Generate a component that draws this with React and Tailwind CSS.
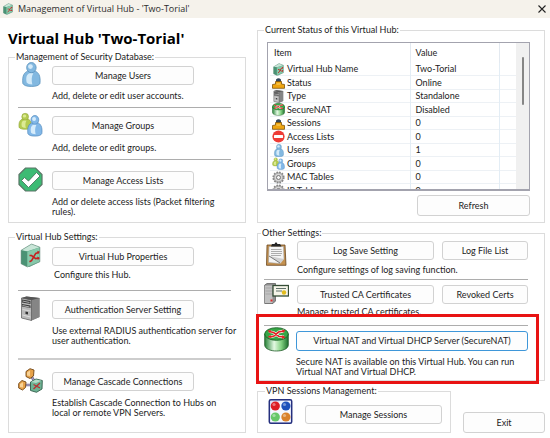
import React from 'react';

function HubIcon({ className }) {
  return (
    <svg className={className} viewBox="0 0 24 24" aria-hidden="true">
      <path d="M3 7 13 1 21 4 21 18 11 23 3 20Z" fill="#5fa98a" />
      <path d="M3 7 13 1 21 4 9 8Z" fill="#c9e6d8" />
      <path d="M3 7 9 8.500 9 23 3 20Z" fill="#4a9274" />
      <path d="M9 8.500 21 4 21 18 9 23Z" fill="#86c9aa" />
      <path d="M3 7 13 1 21 4 21 18 9 23 3 20Z" fill="none" stroke="#6c8f80" strokeWidth=".6" />
      <path d="M11 18 13 17 17 10 20 9M11 12 13 12 17 15 20 14.500" fill="none" stroke="#c61f1f" strokeWidth="1.500" />
      <path d="M18.500 7.500 21 8.500 19 11ZM18.500 13 21 14.500 19 16.500Z" fill="#c61f1f" />
    </svg>
  );
}

function Person({ body, light, edge }) {
  return (
    <g stroke={edge} strokeWidth=".8">
      <path d="M3 21c-1-8 2-11 5-12h8c3 1 6 4 5 12-1 2-4 3-9 3s-8-1-9-3Z" fill={body} />
      <circle cx="12" cy="5.500" r="5" fill={body} />
      <path d="M7 20c-1-5 0-8 3-9h4c-2 3-2 7-1 11-3 0-5-1-6-2Z" fill={light} stroke="none" />
      <ellipse cx="11" cy="4.500" rx="2.500" ry="2.300" fill={light} stroke="none" />
    </g>
  );
}

function UserIcon({ className }) {
  return (
    <svg className={className} viewBox="0 0 24 25" aria-hidden="true">
      <g transform="translate(1.500 0) scale(.95 1.020)">
        <Person body="#82b8e0" light="#d3eaf9" edge="#5a92bd" />
      </g>
    </svg>
  );
}

function GroupIcon({ className }) {
  return (
    <svg className={className} viewBox="0 0 25 25" aria-hidden="true">
      <g transform="translate(-1 1) scale(.68)">
        <Person body="#b4cc50" light="#dcea94" edge="#8fa33c" />
      </g>
      <g transform="translate(7.500 3) scale(.78 .88)">
        <Person body="#82b8e8" light="#d6ecfb" edge="#4f87bb" />
      </g>
    </svg>
  );
}

function CheckIcon({ className }) {
  return (
    <svg className={className} viewBox="0 0 25 25" aria-hidden="true">
      <path d="M7.500 1H17.500L24 7.500V17.500L17.500 24H7.500L1 17.500V7.500Z" fill="#3dbb74" stroke="#5a7466" strokeWidth="1.200" />
      <path d="M3.500 13.500 6.500 10.500 10.500 14 18.500 5.500 22 9 10.500 20.500Z" fill="#fff" stroke="#3f6b52" strokeWidth=".8" />
    </svg>
  );
}

function ServerIcon({ className }) {
  return (
    <svg className={className} viewBox="0 0 24 25" aria-hidden="true">
      <path d="M3 2 8 .500 21 2 21 21 13 24.500 3 22Z" fill="#777" />
      <path d="M3 2 13 4 13 24.500 3 22Z" fill="#b9b9b9" />
      <path d="M13 4 21 2 21 21 13 24.500Z" fill="#858585" />
      <path d="M3 2 8 .500 21 2 13 4Z" fill="#555" />
      <path d="M3.500 3.500 12 5V8L3.500 6.500ZM3.500 8 12 9.500V12L3.500 10.500Z" fill="#3a3a3a" />
      <path d="M4 5 11 6.500M4 9.500 11 11M4 13.500 12 15" stroke="#e4e4e4" strokeWidth=".7" />
      <path d="M7 15.500 9.500 16V18.500L7 18Z" fill="#333" />
      <path d="M4 19 12 21" stroke="#ddd" />
      <path d="M3 2 13 4 13 24.500 3 22Z" fill="none" stroke="#555" strokeWidth=".6" />
    </svg>
  );
}

function CascadeIcon({ className }) {
  return (
    <svg className={className} viewBox="0 0 25 25" aria-hidden="true">
      <path d="M12 6 18 16M5 17H15" stroke="#6f6a94" strokeWidth="2.600" />
      <path d="M12 6 18 16M5 17H15" stroke="#c6c2dc" strokeWidth=".8" />
      <path d="M8 3.500 12 .700 16 2 15.500 8 12 10.500 8 8.500Z" fill="#e6a24a" stroke="#704515" strokeWidth=".9" />
      <path d="M9 4.500 12 2.500 12 8 9 7.500Z" fill="#f8d296" />
      <path d="M.700 15.500 4 12.500 8 14 7.500 19.500 4.500 22 .700 20Z" fill="#e6a24a" stroke="#704515" strokeWidth=".9" />
      <path d="M2 16 5 14.300 5 19.500 2 19Z" fill="#f8d296" />
      <path d="M12.500 14 18 11 24.300 12.500 24 21 18.500 24.300 12.500 22.500Z" fill="#6db394" stroke="#315c49" strokeWidth=".9" />
      <path d="M13 14 18 11.500 23.500 12.800 18 15Z" fill="#b2dcc8" />
      <path d="M15.500 21 22 15M15.500 16.500 22 20" stroke="#b83030" strokeWidth="1.300" />
    </svg>
  );
}

function ClipboardIcon({ className }) {
  return (
    <svg className={className} viewBox="0 0 25 25" aria-hidden="true">
      <path d="M3 4H21L22 24.300H2.500Z" fill="#c4914f" stroke="#694620" strokeWidth=".8" />
      <path d="M5 5.500H19.500L20 18 15.500 22.500 4.500 21.500Z" fill="#f5f5f5" stroke="#999" strokeWidth=".5" />
      <path d="M7 8.500H17.500M7 10.500H18M7 12.500H18M7 14.500H17" stroke="#a5a5a5" strokeWidth=".9" />
      <path d="M5 15 16.500 22.500 20 18Z" fill="#d0d0d0" />
      <path d="M5 15 16 22" stroke="#707070" strokeWidth=".9" />
      <path d="M7 5.500 8 3H10.500Q12-.500 13.500 3H16L17.500 5.500Z" fill="#252525" />
    </svg>
  );
}

function CertIcon({ className }) {
  return (
    <svg className={className} viewBox="0 0 25 21" aria-hidden="true">
      <path d="M.700 2 3 .500H11.500V18L9 20.500H.700Z" fill="#909090" stroke="#555" strokeWidth=".7" />
      <path d="M1 2.500H8.500V20H1Z" fill="#c1c1c1" />
      <path d="M1.500 5H8.500M1.500 8H8.500M1.500 11H8.500" stroke="#999" strokeWidth=".6" />
      <rect x="6.500" y="16.500" width="2" height="2" fill="#e02b2b" />
      <rect x="9" y="2.500" width="15.500" height="10.500" fill="#f5f5e9" stroke="#354d36" strokeWidth="1.300" />
      <path d="M12 5.500H22M12 8H18" stroke="#60716b" strokeWidth="1" />
      <circle cx="20" cy="9.500" r="2.200" fill="#e1bc1d" />
    </svg>
  );
}

function NatIcon({ className }) {
  return (
    <svg className={className} viewBox="0 0 25 25" aria-hidden="true">
      <defs>
        <linearGradient id="natSide">
          <stop offset="0" stopColor="#258236" />
          <stop offset=".4" stopColor="#e3f9e3" />
          <stop offset=".7" stopColor="#83d181" />
          <stop offset="1" stopColor="#1d6e2c" />
        </linearGradient>
      </defs>
      <path d="M.700 7V18C1 26 24 26 24.300 18V7Z" fill="url(#natSide)" stroke="#245c2c" strokeWidth=".8" />
      <ellipse cx="12.500" cy="7" rx="11.800" ry="6.300" fill="#36a646" stroke="#1b6428" strokeWidth=".9" />
      <path d="M5 4.500 9.500 5.500 15 9.500 20 10M5.500 10 10 9 14.500 5 20 4" fill="none" stroke="#fff" strokeWidth="2.800" />
      <path d="M5 4.500 9.500 5.500 15 9.500 20 10M5.500 10 10 9 14.500 5 20 4" fill="none" stroke="#df2424" strokeWidth="1.700" />
      <path d="M3.500 3.500 7 3 6 6ZM21.500 3.500 18 2.500 19 6ZM3.500 10 6.500 8 7.500 11ZM21.500 10.500 18.500 8 18 12Z" fill="#df2424" />
    </svg>
  );
}

function SessionsIcon({ className }) {
  return (
    <svg className={className} viewBox="0 0 24 25" aria-hidden="true">
      <rect x=".800" y=".800" width="22.400" height="23.400" rx="1.500" fill="#dfe3f8" stroke="#25307e" strokeWidth="1.500" />
      <path d="M2 8 12 2H22V23H2Z" fill="#f5f7ff" />
      <circle cx="6.800" cy="7" r="4.600" fill="#dd1d25" />
      <circle cx="17.400" cy="7" r="4.600" fill="#1e51bb" />
      <circle cx="6.800" cy="18" r="4.600" fill="#67c768" />
      <circle cx="17.400" cy="18" r="4.600" fill="#d9812c" />
      <g fill="#fff" opacity=".4">
        <circle cx="5.500" cy="5.500" r="1.600" />
        <circle cx="16" cy="5.500" r="1.600" />
        <circle cx="5.500" cy="16.500" r="1.600" />
        <circle cx="16" cy="16.500" r="1.600" />
      </g>
    </svg>
  );
}

function PlugIcon({ className }) {
  return (
    <svg className={className} viewBox="0 0 13 13" aria-hidden="true">
      <path d="M4 6V3.500Q6.500 1 9 3.500V6Z" fill="#34485c" />
      <path d="M.500 12.300V8.500L3.500 8V5.500H9.500V8L12.500 8.500V12.300Z" fill="#efa510" stroke="#7c520a" strokeWidth=".8" />
      <path d="M4.500 8H8.500" stroke="#fbd871" strokeWidth="1" />
    </svg>
  );
}

function StopIcon({ className }) {
  return (
    <svg className={className} viewBox="0 0 13 13" aria-hidden="true">
      <circle cx="6.500" cy="6.500" r="6.100" fill="#ee3b36" />
      <rect x="2" y="5" width="9" height="3" rx=".5" fill="#fff" />
    </svg>
  );
}

function GearIcon({ className }) {
  return (
    <svg className={className} viewBox="0 0 13 13" aria-hidden="true">
      <circle cx="6.500" cy="6.500" r="5.300" fill="#c9c9c9" stroke="#858585" strokeWidth="1.600" strokeDasharray="1.660 1.110" />
      <circle cx="6.500" cy="6.500" r="4.300" fill="#d5d5d5" stroke="#999" strokeWidth=".8" />
      <circle cx="6.500" cy="6.500" r="2" fill="#f3f3f3" stroke="#777" strokeWidth="1" />
    </svg>
  );
}

function Button({ className = '', children }) {
  return (
    <button
      type="button"
      className={`block rounded-[3px] border bg-[#fdfdfd] text-center leading-3 whitespace-nowrap ${className}`}
    >
      {children}
    </button>
  );
}

function Group({ title, className = '', children }) {
  return (
    <fieldset className={`min-w-0 border border-[#dcdcdc] ${className}`}>
      <legend className="-ml-[3px] h-3 px-px leading-3">{title}</legend>
      {children}
    </fieldset>
  );
}

function Setting({ icon: Icon, label, className = '', textClass = '', children }) {
  return (
    <div className={`flex gap-[9px] ${className}`}>
      <Icon className="-mt-1 size-[25px] shrink-0" />
      <div className="min-w-0">
        <Button className="h-[19px] w-[142px] border-[#d2d2d2]">{label}</Button>
        <p className={`leading-[10px] whitespace-nowrap ${textClass}`}>{children}</p>
      </div>
    </div>
  );
}

const status = [
  [HubIcon, 'Virtual Hub Name', 'Two-Torial'],
  [PlugIcon, 'Status', 'Online'],
  [ServerIcon, 'Type', 'Standalone'],
  [NatIcon, 'SecureNAT', 'Disabled'],
  [PlugIcon, 'Sessions', '0'],
  [StopIcon, 'Access Lists', '0'],
  [UserIcon, 'Users', '1'],
  [GroupIcon, 'Groups', '0'],
  [GearIcon, 'MAC Tables', '0'],
  [GearIcon, 'IP Tables', '0'],
];

function StatusList() {
  return (
    <div className="flex h-[149px] overflow-hidden border border-b-2 border-[#a3a3ae] pl-0.5">
      <table className="h-[155px] flex-1 table-fixed border-collapse">
        <colgroup>
          <col />
          <col className="w-[89px]" />
          <col className="w-[17px]" />
        </colgroup>
        <thead>
          <tr className="h-5">
            <th scope="col" className="border-r border-[#e3e9f0] p-0 pl-1 text-left font-normal">Item</th>
            <th scope="col" className="border-r border-[#e3e9f0] p-0 pl-[5px] text-left font-normal">Value</th>
            <td />
          </tr>
        </thead>
        <tbody>
          {status.map(([Icon, name, value]) => (
            <tr key={name} className="border-b border-[#edf1f5]">
              <td className="border-r border-[#e3edf5] p-0">
                <div className="flex h-3 items-center gap-0.5 pl-0.5 leading-3">
                  <Icon className="size-[13px] shrink-0" />
                  {name}
                </div>
              </td>
              <td className="border-r border-[#e3edf5] p-0 pl-[5px] leading-3">{value}</td>
              <td />
            </tr>
          ))}
        </tbody>
      </table>
      <div className="flex w-[13px] justify-center bg-[#f0f0f0] pt-3.5">
        <div className="h-12 w-0.5 rounded-full bg-[#858585]" />
      </div>
    </div>
  );
}

export default function App() {
  return (
    <div className="min-h-screen bg-white font-['Lato','Open_Sans',sans-serif] text-[9px] text-[#1c1c1c]">
      <header className="flex h-[18px] items-center bg-[#f5f2eb] pr-0.5 pl-0.5">
        <HubIcon className="size-3" />
        <span className="ml-1 flex-1 font-['Open_Sans','Noto_Sans',sans-serif] leading-4 text-[#2c2c2c]">
          Management of Virtual Hub - 'Two-Torial'
        </span>
        <button type="button" aria-label="Close" className="p-0.5">
          <svg className="size-2" viewBox="0 0 8 8" aria-hidden="true">
            <path d="M.500.500 7.500 7.500M7.500.500.500 7.500" stroke="#222" strokeWidth="1.100" />
          </svg>
        </button>
      </header>

      <main className="grid grid-cols-[minmax(0,238fr)_minmax(0,288fr)] gap-[11px] pr-[5px] pl-2">
        <div className="flex flex-col">
          <h1 className="mt-2.5 mb-[3px] font-['Open_Sans','Noto_Sans',sans-serif] text-[15px] leading-5 font-bold whitespace-nowrap text-black">
            Virtual Hub 'Two-Torial'
          </h1>

          <Group title="Management of Security Database:" className="pr-3.5 pb-[5px] pl-[9px]">
            <Setting icon={UserIcon} label="Manage Users" className="pt-[3px]" textClass="mt-1.5">
              Add, delete or edit user accounts.
            </Setting>
            <hr className="mt-1.5 border-[#adadad]" />
            <Setting icon={GroupIcon} label="Manage Groups" className="pt-2" textClass="mt-2">
              Add, delete or edit groups.
            </Setting>
            <hr className="mt-1.5 border-[#adadad]" />
            <Setting icon={CheckIcon} label="Manage Access Lists" className="pt-[11px]" textClass="mt-[7px]">
              Add or delete access lists (Packet filtering
              <br />
              rules).
            </Setting>
          </Group>

          <Group title="Virtual Hub Settings:" className="mt-2 pr-3.5 pb-3.5 pl-[9px]">
            <Setting icon={HubIcon} label="Virtual Hub Properties" className="pt-1" textClass="mt-1 pl-0.5">
              Configure this Hub.
            </Setting>
            <hr className="mt-2.5 border-[#adadad]" />
            <Setting icon={ServerIcon} label="Authentication Server Setting" className="pt-[9px]" textClass="mt-[7px]">
              Use external RADIUS authentication server for
              <br />
              user authentication.
            </Setting>
            <hr className="mt-3 border-t-2 border-[#cdcdcd]" />
            <Setting icon={CascadeIcon} label="Manage Cascade Connections" className="pt-3" textClass="mt-[7px]">
              Establish Cascade Connection to Hubs on
              <br />
              local or remote VPN Servers.
            </Setting>
          </Group>
        </div>

        <div className="flex flex-col pt-1.5">
          <Group title="Current Status of this Virtual Hub:" className="pr-3.5 pb-1.5 pl-[9px]">
            <div className="pt-1.5">
              <StatusList />
            </div>
            <Button className="mt-1 ml-auto h-[21px] w-[113px] border-[#d2d2d2]">Refresh</Button>
          </Group>

          <Group title="Other Settings:" className="relative mt-1 pr-4 pb-[3px] pl-1.5">
            <div className="flex gap-2 pt-0.5">
              <ClipboardIcon className="size-[25px] shrink-0" />
              <div className="min-w-0 flex-1">
                <div className="flex gap-2">
                  <Button className="h-[19px] flex-1 border-[#d2d2d2]">Log Save Setting</Button>
                  <Button className="h-[19px] w-[86px] border-[#d2d2d2]">Log File List</Button>
                </div>
                <p className="mt-[5px] leading-[10px] whitespace-nowrap">
                  Configure settings of log saving function.
                </p>
              </div>
            </div>
            <hr className="mt-1 border-[#adadad]" />
            <div className="flex gap-2 pt-[5px]">
              <CertIcon className="-mt-1 size-[25px] shrink-0" />
              <div className="min-w-0 flex-1">
                <div className="flex gap-2">
                  <Button className="h-[19px] flex-1 border-[#d2d2d2]">Trusted CA Certificates</Button>
                  <Button className="h-[19px] w-[86px] border-[#d2d2d2]">Revoked Certs</Button>
                </div>
                <p className="mt-[3px] leading-[10px] whitespace-nowrap">Manage trusted CA certificates.</p>
              </div>
            </div>
            <hr className="mt-2 border-[#adadad]" />
            <div className="flex gap-[7px] pt-[5px]">
              <NatIcon className="-mt-1 size-[25px] shrink-0" />
              <div className="min-w-0 flex-1">
                <Button className="h-5 w-full border-[#3f97d9]">
                  Virtual NAT and Virtual DHCP Server (SecureNAT)
                </Button>
                <p className="mt-1.5 leading-[10px] whitespace-nowrap">
                  Secure NAT is available on this Virtual Hub. You can run
                  <br />
                  Virtual NAT and Virtual DHCP.
                </p>
              </div>
            </div>
            <div className="pointer-events-none absolute right-[5px] -bottom-1 -left-0.5 h-[70px] border-3 border-[#e81313]" />
          </Group>

          <div className="mt-1 flex items-end justify-between">
            <Group title="VPN Sessions Management:" className="w-[194px] pr-2 pb-2 pl-2.5">
              <div className="flex items-end gap-3 pt-0.5">
                <SessionsIcon className="size-[25px] shrink-0" />
                <Button className="h-[19px] flex-1 border-[#d2d2d2]">Manage Sessions</Button>
              </div>
            </Group>
            <Button className="h-[21px] w-[82px] border-[#d2d2d2]">Exit</Button>
          </div>
        </div>
      </main>
    </div>
  );
}
